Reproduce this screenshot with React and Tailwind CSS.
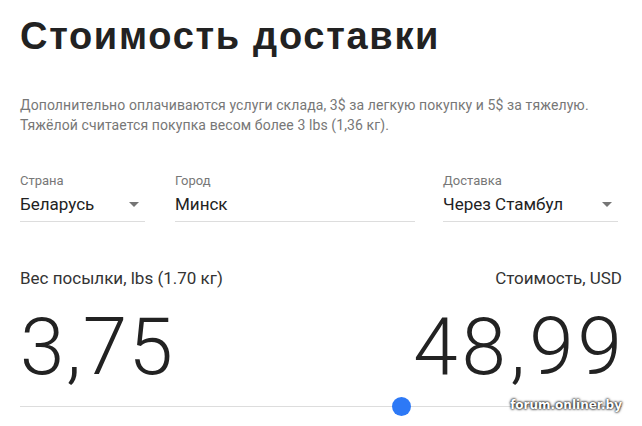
import React from "react";

const Select = ({ label, value, arrow, className }) => (
    <div className={className}>
        <div className="text-[13px] leading-[14px] text-[#777]">{label}</div>
        <div className="mt-[6px] flex items-center justify-between border-b border-[#ddd] pb-[7px]">
            <span className="text-[17px] leading-[20px] text-[#222]">{value}</span>
            {arrow && (
                <svg width="10" height="5" viewBox="0 0 10 5" className="mr-[6px]">
                    <path d="M0 0h10L5 5z" fill="#757575" />
                </svg>
            )}
        </div>
    </div>
);

export default function App() {
    return (
        <div className="w-[642px] h-[426px] overflow-hidden bg-white px-5 font-['Roboto',sans-serif]">
            {/* Title */}
            <h1 className="pt-[14px] text-[38px] leading-[44px] font-bold tracking-[1.7px] text-[#222] font-['Liberation_Sans',sans-serif]">
                Стоимость доставки
            </h1>

            <p className="mt-[37px] text-[14px] leading-[20px] tracking-[0.1px] text-[#777]">
                Дополнительно оплачиваются услуги склада, 3$ за легкую покупку и 5$ за тяжелую.
                <br />
                Тяжёлой считается покупка весом более 3 lbs (1,36 кг).
            </p>

            {/* Selects */}
            <div className="mt-[39px] flex">
                <Select className="w-[125px]" label="Страна" value="Беларусь" arrow />
                <Select className="ml-[30px] w-[240px]" label="Город" value="Минск" />
                <Select className="ml-[28px] w-[175px]" label="Доставка" value="Через Стамбул" arrow />
            </div>

            {/* Weight / price */}
            <div className="mt-[46px] flex justify-between text-[17px] leading-[20px] text-[#333]">
                <span>Вес посылки, lbs (1.70 кг)</span>
                <span>Стоимость, USD</span>
            </div>

            <div className="mt-[15px] flex justify-between text-[#222] text-[80px] leading-[88px] font-light">
                <span className="tracking-[1.5px]">3,75</span>
                <span className="tracking-[4px] -mr-[4px]">48,99</span>
            </div>

            {/* Slider */}
            <div className="relative mt-[4px] h-[22px]">
                <div className="absolute left-0 right-0 top-[11px] h-px bg-[#ddd]" />
                <div className="absolute left-[372px] top-[2px] h-[19px] w-[19px] rounded-full bg-[#2d79f6]" />
                <div className="absolute right-0 top-[2px] text-[12px] leading-[16px] font-bold text-white font-['DejaVu_Sans',sans-serif] [text-shadow:0_0_3px_#000,0_0_2px_#000]">
                    forum.onliner.by
                </div>
            </div>
        </div>
    );
}
